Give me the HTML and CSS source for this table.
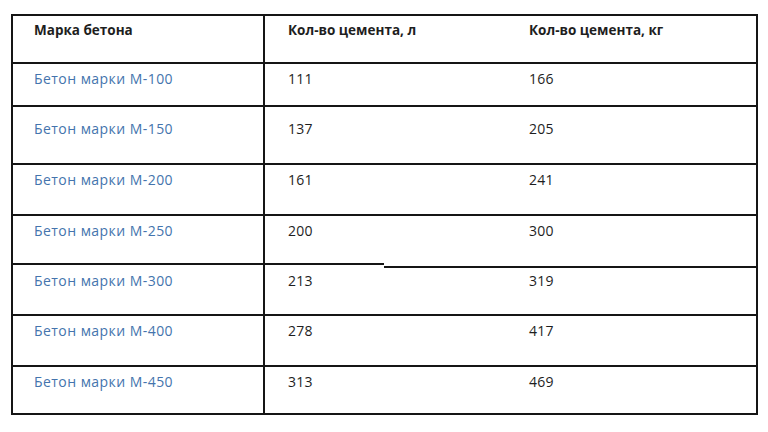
FILE: index.html
```html
<!DOCTYPE html>
<html lang="ru">
<head>
<meta charset="utf-8">
<link rel="stylesheet" href="styles.css">
</head>
<body>
<div class="tbl">
  <div class="row head">
    <div class="cell c1">Марка бетона</div>
    <div class="cell c2">Кол-во цемента, л</div>
    <div class="cell c3">Кол-во цемента, кг</div>
  </div>
  <div class="row">
    <div class="cell c1 link">Бетон марки М-100</div>
    <div class="cell c2">111</div>
    <div class="cell c3">166</div>
  </div>
  <div class="row">
    <div class="cell c1 link">Бетон марки М-150</div>
    <div class="cell c2">137</div>
    <div class="cell c3">205</div>
  </div>
  <div class="row">
    <div class="cell c1 link">Бетон марки М-200</div>
    <div class="cell c2">161</div>
    <div class="cell c3">241</div>
  </div>
  <div class="row">
    <div class="cell c1 link">Бетон марки М-250</div>
    <div class="cell c2">200</div>
    <div class="cell c3">300</div>
  </div>
  <div class="row split">
    <div class="cell c1 link">Бетон марки М-300</div>
    <div class="cell c2">213</div>
    <div class="cell c3">319</div>
  </div>
  <div class="row">
    <div class="cell c1 link">Бетон марки М-400</div>
    <div class="cell c2">278</div>
    <div class="cell c3">417</div>
  </div>
  <div class="row">
    <div class="cell c1 link">Бетон марки М-450</div>
    <div class="cell c2">313</div>
    <div class="cell c3">469</div>
  </div>
</div>
</body>
</html>
```
FILE: styles.css
```css
html, body {
  margin: 0;
  padding: 0;
  background: #ffffff;
}
body {
  font-family: "Open Sans", "Liberation Sans", sans-serif;
  font-size: 14px;
  line-height: 16px;
  color: #1e1e1e;
}
.tbl {
  box-sizing: border-box;
  margin: 14px 0 0 11px;
  width: 747px;
  border: 2px solid #151515;
}
.row {
  box-sizing: border-box;
  display: grid;
  grid-template-columns: 252px 240px 1fr;
  border-top: 2px solid #151515;
}
.row.head {
  border-top: none;
  height: 46px;
}
.row:nth-child(2) { height: 43px; }
.row:nth-child(3) { height: 58px; }
.row:nth-child(4) { height: 51px; }
.row:nth-child(5) { height: 49px; }
.row:nth-child(6) { height: 51px; }
.row:nth-child(7) { height: 51px; }
.row:nth-child(8) { height: 48px; }
.row.split {
  border-top: none;
  background-image:
    linear-gradient(#151515, #151515),
    linear-gradient(#151515, #151515);
  background-repeat: no-repeat;
  background-size: 371px 2px, calc(100% - 371px) 2px;
  background-position: 0 0, 371px 3px;
}
.cell {
  padding-top: 7px;
  white-space: nowrap;
}
.row.head .cell {
  padding-top: 6px;
  font-weight: 700;
  font-size: 13.5px;
  letter-spacing: 0;
}
.row:nth-child(3) .cell { padding-top: 14px; }
.row.split .cell { padding-top: 10px; }
.c1 {
  padding-left: 21px;
  border-right: 2px solid #151515;
}
.c2 { padding-left: 23px; letter-spacing: 0.3px; }
.c3 { padding-left: 24px; letter-spacing: 0.3px; }
.link { color: #4474ad; letter-spacing: 0.45px; }
```
